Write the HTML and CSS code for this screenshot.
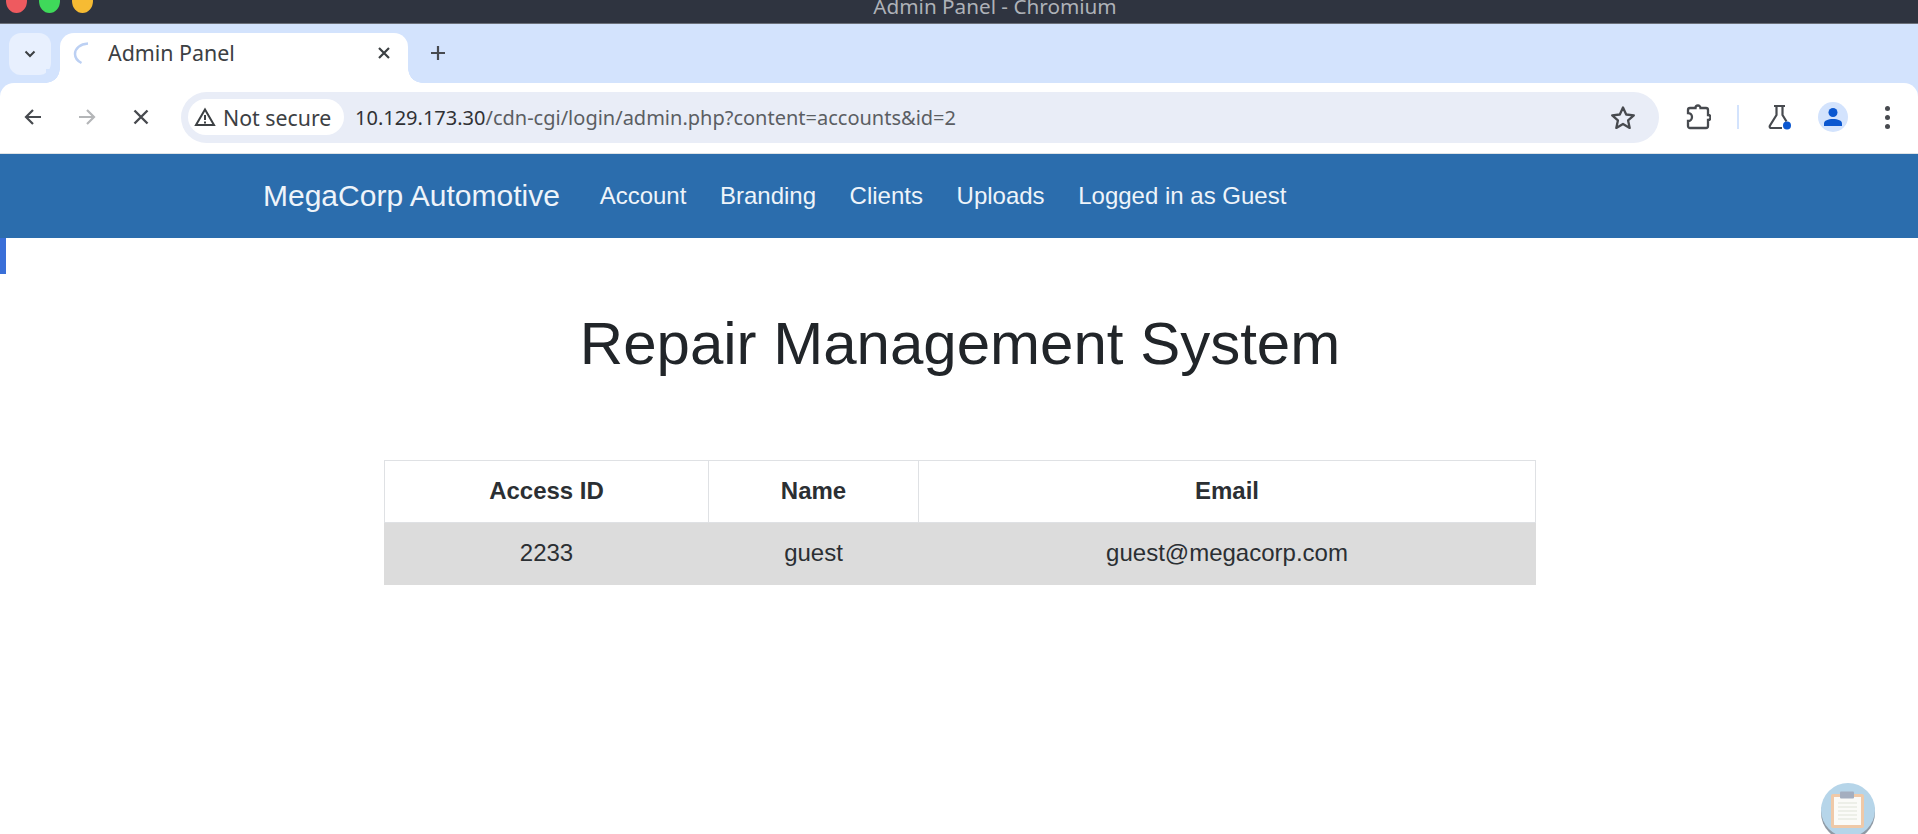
FILE: index.html
```html
<!DOCTYPE html>
<html lang="en">
<head>
<meta charset="utf-8">
<title>Admin Panel</title>
<link rel="stylesheet" href="styles.css">
</head>
<body>
<div class="titlebar">
  <div class="lights"><span class="light red"></span><span class="light green"></span><span class="light yellow"></span></div>
  <div class="wintitle">Admin Panel - Chromium</div>
</div>
<div class="chrome">
<div class="tabstrip">
  <div class="tabsearch"><svg width="12" height="8" viewBox="0 0 12 8"><path d="M1.5 1.5 6 6l4.500-4.500" fill="none" stroke="#3c4043" stroke-width="2"/></svg></div>
  <div class="tab">
    <svg class="spin" width="22" height="24" viewBox="0 0 22 24"><path d="M17 2.500C9 3 4 7.500 4 13c0 4 2.500 7 6.500 9" fill="none" stroke="#bcd0f3" stroke-width="2.500"/></svg>
    <span class="tabtitle">Admin Panel</span>
    <svg class="tabx" width="14" height="14" viewBox="0 0 14 14"><path d="M2 2l10 10M12 2 2 12" stroke="#3c4043" stroke-width="2.200"/></svg>
  </div>
  <svg class="newtab" width="16" height="16" viewBox="0 0 16 16"><path d="M8 1v14M1 8h14" stroke="#474a4f" stroke-width="2.200"/></svg>
</div>
<div class="toolbar">
  <div class="navbtns">
    <svg width="20" height="20" viewBox="0 0 20 20"><path d="M18 10H3M10 3l-7 7 7 7" fill="none" stroke="#474a4f" stroke-width="2.200"/></svg>
    <svg width="20" height="20" viewBox="0 0 20 20"><path d="M2 10h15M10 3l7 7-7 7" fill="none" stroke="#b4b6b8" stroke-width="2.200"/></svg>
    <svg width="16" height="16" viewBox="0 0 16 16"><path d="M1.500 1.500l13 13M14.500 1.500l-13 13" stroke="#474a4f" stroke-width="2.400"/></svg>
  </div>
  <div class="omnibox">
    <div class="chip">
      <svg width="22" height="20" viewBox="0 0 22 20"><path d="M11 2.500 20 18H2Z" fill="none" stroke="#3c4043" stroke-width="2"/><path d="M11 8v5M11 14.500v2" stroke="#3c4043" stroke-width="2"/></svg>
      <span class="chiptext">Not secure</span>
    </div>
    <div class="url">10.129.173.30<span class="path">/cdn-cgi/login/admin.php?content=accounts&amp;id=2</span></div>
    <svg class="star" width="26" height="25" viewBox="0 0 26 25"><path d="M13 2.500l3.200 7 7.600.8-5.700 5.100 1.600 7.500L13 18.900l-6.700 4 1.600-7.500-5.700-5.100 7.600-.8Z" fill="none" stroke="#474a4f" stroke-width="2.300" stroke-linejoin="round"/></svg>
  </div>
  <div class="tools">
    <svg class="ext" width="26" height="28" viewBox="0 0 26 28"><path d="M5 5h5.500a2.500 2.500 0 0 1 5 0H21a2 2 0 0 1 2 2v5a2.500 2.500 0 0 1 0 5v6a2 2 0 0 1-2 2H5a2 2 0 0 1-2-2v-5a4 4 0 0 0 0-8V7a2 2 0 0 1 2-2Z" fill="none" stroke="#474a4f" stroke-width="2.300"/></svg>
    <span class="sep"></span>
    <svg class="flask" width="28" height="28" viewBox="0 0 28 28"><path d="M8 3h11M10.500 3v9L4 22.500c-.8 1.500 0 2.500 1.500 2.500H16M16.500 3v9l4 6.500" fill="none" stroke="#474a4f" stroke-width="2.200"/><circle cx="21" cy="22.500" r="4" fill="#0b57d0"/></svg>
    <div class="avatar"><svg width="20" height="20" viewBox="0 0 20 20"><circle cx="10" cy="5.500" r="4.500" fill="#0b57d0"/><path d="M1 19v-2.500C1 13.500 5 12 10 12s9 1.500 9 4.500V19Z" fill="#0b57d0"/></svg></div>
    <div class="dots"><span></span><span></span><span></span></div>
  </div>
</div>
</div>
<nav class="nav">
  <a class="brand">MegaCorp Automotive</a>
  <ul class="links">
    <li>Account</li>
    <li>Branding</li>
    <li>Clients</li>
    <li>Uploads</li>
    <li>Logged in as Guest</li>
  </ul>
</nav>
<div class="progress"></div>
<main class="content">
  <h1>Repair Management System</h1>
  <table class="accounts">
    <thead><tr><th class="c1">Access ID</th><th class="c2">Name</th><th class="c3">Email</th></tr></thead>
    <tbody><tr><td>2233</td><td>guest</td><td>guest@megacorp.com</td></tr></tbody>
  </table>
</main>
<svg class="clip" width="56" height="54" viewBox="0 0 56 54">
  <ellipse cx="28" cy="30" rx="27" ry="27" fill="#8f9aa5"/>
  <circle cx="28" cy="27" r="27" fill="#b6d5e9"/>
  <rect x="11" y="11" width="33" height="34" rx="2" fill="#efc9a8"/>
  <rect x="14" y="14" width="27" height="28" fill="#fbfbf8"/>
  <rect x="20" y="8.500" width="14" height="7" rx="1" fill="#a4aebf"/>
  <path d="M18 20h19M18 24h19M18 28h19M18 32h19M18 36h19" stroke="#e9ebe2" stroke-width="1.500"/>
</svg>
</body>
</html>
```
FILE: styles.css
```css
* { box-sizing: border-box; }
html, body { margin: 0; height: 100%; overflow: hidden; background: #fff; }
body { position: relative; font-family: "Liberation Sans", Arial, sans-serif; color: #212529; }

.titlebar { height: 24px; background: #2f3440; border-bottom: 1px solid #6b7079; position: relative; overflow: hidden; }
.lights { display: flex; gap: 12px; margin: -11px 0 0 6px; }
.light { width: 21px; height: 24px; border-radius: 50%; }
.red { background: #ee5a5f; }
.green { background: #3fd95a; }
.yellow { background: #f6bb33; }
.wintitle { position: absolute; top: -4px; left: 0; right: 0; text-align: center; margin-left: 72px; color: #aeb2b8; font: 20.700px/20px "Noto Sans", sans-serif; }

.chrome { background: #d3e3fd; }
.tabstrip { height: 59px; display: flex; align-items: flex-start; padding: 9px 0 0 9px; }
.tabsearch { width: 42px; height: 42px; border-radius: 12px; background: #e8f0fe; display: flex; align-items: center; justify-content: center; }
.tab { position: relative; width: 348px; height: 50px; margin-left: 9px; background: #fff; border-radius: 14px 14px 0 0; display: flex; align-items: center; padding: 0 17px 10px 11px; }
.tab::before, .tab::after { content: ""; position: absolute; bottom: 0; width: 14px; height: 14px; }
.tab::before { left: -14px; background: radial-gradient(circle at 0 0, #d3e3fd 13.500px, #fff 14px); }
.tab::after { right: -14px; background: radial-gradient(circle at 100% 0, #d3e3fd 13.500px, #fff 14px); }
.tabtitle { margin-left: 15px; flex: 1; font: 21.400px/26px "Noto Sans", sans-serif; color: #3c4043; }
.newtab { margin: 12px 0 0 22px; }

.toolbar { height: 71px; background: #fff; border-radius: 14px 14px 0 0; border-bottom: 1px solid #dfe3e6; display: flex; align-items: center; padding: 0 0 2px 0; }
.navbtns { display: flex; align-items: center; width: 181px; padding-left: 23px; gap: 34px; }
.navbtns svg:last-child { margin-left: 2px; }
.omnibox { width: 1478px; height: 51px; border-radius: 26px; background: #e9edf7; display: flex; align-items: center; padding: 0 23px 0 7px; }
.chip { height: 36px; width: 156px; background: #fff; border-radius: 18px; display: flex; align-items: center; padding-left: 6px; gap: 7px; font: 21.300px/26px "Noto Sans", sans-serif; color: #3c4043; white-space: nowrap; }
.chiptext { padding-top: 1px; }
.url { flex: 1; margin-left: 11px; padding-top: 2px; font: 20px/26px "Noto Sans", sans-serif; color: #303134; white-space: nowrap; }
.path { color: #5b5e63; }
.tools { flex: 1; display: flex; align-items: center; padding-left: 26px; }
.sep { width: 2px; height: 24px; background: #d3e3fd; margin: 0 27px 0 26px; }
.flask { margin-right: 24px; }
.avatar { width: 30px; height: 30px; border-radius: 50%; background: #d3e3fd; display: flex; align-items: center; justify-content: center; }
.dots { display: flex; flex-direction: column; gap: 4px; margin-left: 37px; }
.dots span { width: 5px; height: 5px; border-radius: 50%; background: #474a4f; }

.nav { height: 84px; background: #2b6dad; display: flex; align-items: center; padding: 0 0 0 263px; color: #eef4fa; }
.brand { font-size: 30px; line-height: 40px; margin-right: 23px; }
.links { display: flex; list-style: none; margin: 0 0 1px; padding: 0; font-size: 24px; line-height: 34px; }
.links li { padding: 0 16.800px; }

.progress { position: absolute; left: 0; top: 238px; width: 6px; height: 36px; background: #3a6fd8; }

.content { display: flex; flex-direction: column; align-items: center; padding-left: 2px; padding-top: 1px; }
h1 { margin: 69px 0 0; font-size: 60px; font-weight: 400; line-height: 72px; text-align: center; }
.accounts { margin-top: 80px; width: 1152px; border-collapse: collapse; font-size: 24px; line-height: 36px; text-align: center; table-layout: fixed; color: #2b2f33; }
.accounts th, .accounts td { padding: 12px 0 13px; border: 1px solid #dfe1e4; }
.accounts th { font-weight: 700; }
.accounts td { background: #dcdcdc; border-color: #dcdcdc; }
.c1 { width: 324px; }
.c2 { width: 210px; }

.clip { position: absolute; left: 1820px; top: 783px; }
```
